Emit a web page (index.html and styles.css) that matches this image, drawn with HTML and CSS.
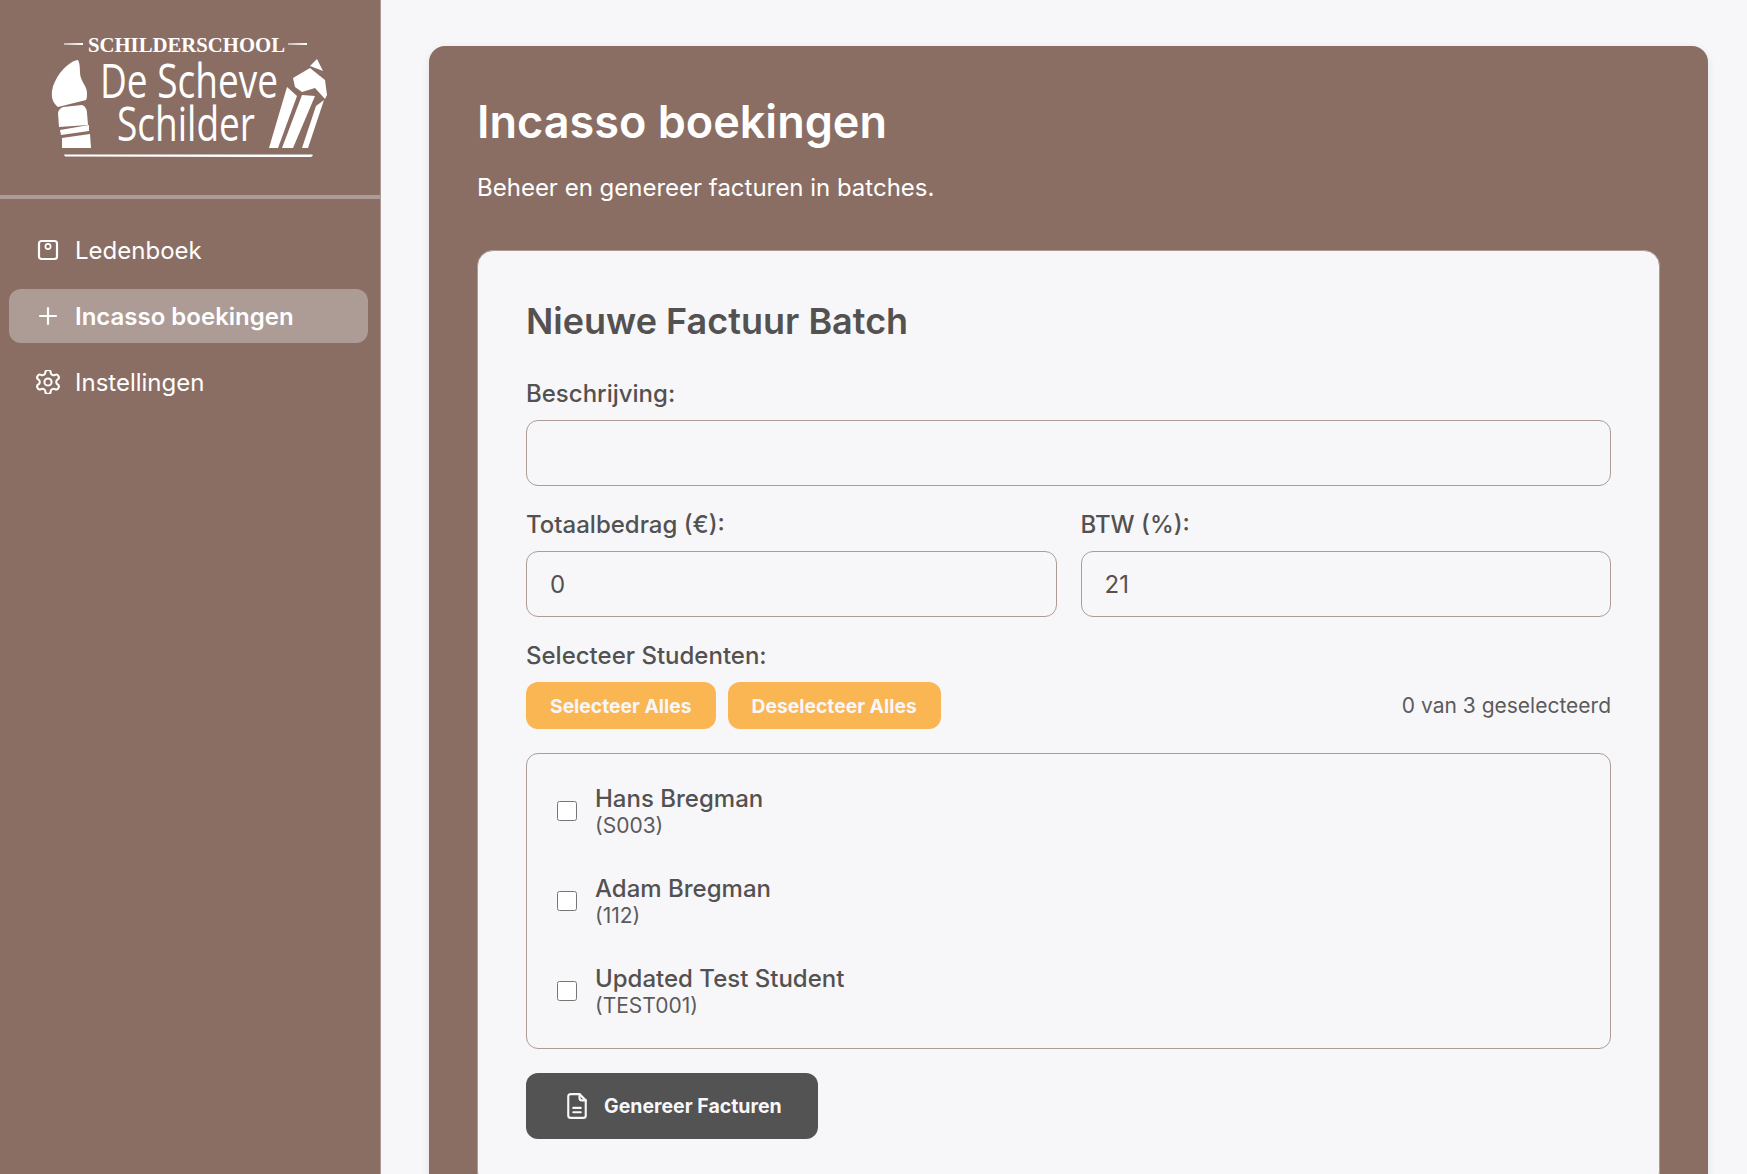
FILE: index.html
```html
<!DOCTYPE html>
<html lang="nl">
<head>
  <meta charset="UTF-8">
  <meta name="viewport" content="width=device-width, initial-scale=1.0">
  <title>Incasso boekingen</title>
  <link rel="stylesheet" href="styles.css">
</head>
<body>
  <div class="app">
    <aside class="sidebar">
      <div class="logo">
        <svg class="logo-img" viewBox="0 0 380 195" width="380" height="195" fill="#fff">
          <path d="M64 43.500l19-.5v2l-19-.5z"/>
          <path d="M288 43.500l19-.5v2l-19-.5z"/>
          <text class="logo-top" x="88" y="52" textLength="197" lengthAdjust="spacingAndGlyphs">SCHILDERSCHOOL</text>
          <text class="logo-hand" x="100" y="98" textLength="178" lengthAdjust="spacingAndGlyphs">De Scheve</text>
          <text class="logo-hand" x="117" y="141" textLength="138" lengthAdjust="spacingAndGlyphs">Schilder</text>
          <!-- brush -->
          <path d="M78 60c3 6 1 12 3 18 2 6 6 9 6 15 0 3 0 5-1 7l-28 7c-4-3-7-8-6-16 1-7 4-12 8-18 5-6 11-12 18-13z"/>
          <path d="M58 113c1-4 3-5 5-6l19-2c3 1 5 4 5 8l1 12-29 2z"/>
          <path d="M60 130l29-5v6l-28 4z"/>
          <path d="M62 138l28-4 1 14H62z"/>
          <!-- pencil -->
          <path d="M317 59l6 12-13-5z"/>
          <path d="M293 78l17-10 15 12 2 15-2 4-10-11-13 4-7-5z"/>
          <path d="M287 87l10 9-19 52h-9z"/>
          <path d="M302 95l13 1-22 52h-11z"/>
          <path d="M324 100l-16 48h-6l14-42z"/>
          <path d="M64 154.500h248l1 1-2 1.500-246-.5z"/>
        </svg>
      </div>
      <nav class="nav">
        <a class="nav-item">
          <svg class="nav-icon" viewBox="0 0 24 24"><rect x="3" y="3" width="18" height="18" rx="2.5"/><circle class="thin" cx="12" cy="8.500" r="2.600"/></svg>
          <span>Ledenboek</span>
        </a>
        <a class="nav-item active">
          <svg class="nav-icon" viewBox="0 0 24 24"><path d="M12 4v16M4 12h16"/></svg>
          <span>Incasso boekingen</span>
        </a>
        <a class="nav-item">
          <svg class="nav-icon gear" viewBox="2 2 20 20"><path d="M12.22 2h-.44a2 2 0 0 0-2 2v.18a2 2 0 0 1-1 1.73l-.43.25a2 2 0 0 1-2 0l-.15-.08a2 2 0 0 0-2.73.73l-.22.38a2 2 0 0 0 .73 2.73l.15.1a2 2 0 0 1 1 1.72v.51a2 2 0 0 1-1 1.74l-.15.09a2 2 0 0 0-.73 2.73l.22.38a2 2 0 0 0 2.73.73l.15-.08a2 2 0 0 1 2 0l.43.25a2 2 0 0 1 1 1.73V20a2 2 0 0 0 2 2h.44a2 2 0 0 0 2-2v-.18a2 2 0 0 1 1-1.73l.43-.25a2 2 0 0 1 2 0l.15.08a2 2 0 0 0 2.73-.73l.22-.39a2 2 0 0 0-.73-2.73l-.15-.08a2 2 0 0 1-1-1.74v-.5a2 2 0 0 1 1-1.74l.15-.09a2 2 0 0 0 .73-2.73l-.22-.38a2 2 0 0 0-2.73-.73l-.15.08a2 2 0 0 1-2 0l-.43-.25a2 2 0 0 1-1-1.73V4a2 2 0 0 0-2-2z"/><circle cx="12" cy="12" r="3"/></svg>
          <span>Instellingen</span>
        </a>
      </nav>
    </aside>

    <main class="main">
      <section class="panel">
        <h1 class="title">Incasso boekingen</h1>
        <p class="subtitle">Beheer en genereer facturen in batches.</p>

        <div class="card">
          <h2 class="card-title">Nieuwe Factuur Batch</h2>

          <div class="field">
            <label class="label">Beschrijving:</label>
            <input class="input" type="text">
          </div>

          <div class="field-row">
            <div class="field">
              <label class="label">Totaalbedrag (€):</label>
              <input class="input" type="text" value="0">
            </div>
            <div class="field">
              <label class="label">BTW (%):</label>
              <input class="input" type="text" value="21">
            </div>
          </div>

          <label class="label">Selecteer Studenten:</label>
          <div class="select-bar">
            <button class="btn-orange">Selecteer Alles</button>
            <button class="btn-orange">Deselecteer Alles</button>
            <span class="count">0 van 3 geselecteerd</span>
          </div>

          <div class="students">
            <label class="student">
              <input class="check" type="checkbox">
              <span class="student-info"><span class="student-name">Hans Bregman</span><span class="student-code">(S003)</span></span>
            </label>
            <label class="student">
              <input class="check" type="checkbox">
              <span class="student-info"><span class="student-name">Adam Bregman</span><span class="student-code">(112)</span></span>
            </label>
            <label class="student">
              <input class="check" type="checkbox">
              <span class="student-info"><span class="student-name">Updated Test Student</span><span class="student-code">(TEST001)</span></span>
            </label>
          </div>

          <button class="btn-dark">
            <svg class="btn-icon" viewBox="0 0 24 24"><path d="M14 2.500H7a2 2 0 0 0-2 2v15a2 2 0 0 0 2 2h10a2 2 0 0 0 2-2V7.500z"/><path d="M14 2.500v3a2 2 0 0 0 2 2h3"/><path d="M9 13.500h6M9 17h6"/></svg>
            Genereer Facturen
          </button>
        </div>
      </section>
    </main>
  </div>
</body>
</html>
```

FILE: styles.css
```css
* {
  box-sizing: border-box;
}
body {
  margin: 0;
  height: 100vh;
  overflow: hidden;
  background-color: #f7f7fa;
  font-family: Inter, "Noto Sans", sans-serif;
  color: #545151;
}
.app {
  display: flex;
  height: 100vh;
}
.sidebar {
  width: 381px;
  flex-shrink: 0;
  background-color: #8b6e63;
  border-right: 1px solid #ad9b96;
}
.logo {
  height: 199px;
  border-bottom: 4px solid #ad9b96;
}
.logo-img {
  display: block;
}
.logo-top {
  font-family: "Liberation Serif", serif;
  font-size: 21px;
  font-weight: bold;
}
.logo-hand {
  font-family: "Open Sans", sans-serif;
  font-size: 47px;
  font-weight: 500;
}
.nav {
  display: flex;
  flex-direction: column;
  gap: 12px;
  padding: 24px 12px 24px 9px;
}
.nav-item {
  display: flex;
  align-items: center;
  gap: 15px;
  height: 54px;
  padding-left: 27px;
  border-radius: 12px;
  font-size: 24px;
  color: #fff;
}
.nav-item.active {
  background-color: #ad9b96;
  font-weight: 600;
}
.nav-icon {
  width: 24px;
  height: 24px;
  fill: none;
  stroke: #fff;
  stroke-width: 2.2;
  stroke-linecap: round;
  stroke-linejoin: round;
}
.nav-icon .thin {
  stroke-width: 1.7;
}
.nav-icon.gear {
  stroke-width: 1.7;
}
.main {
  flex: 1;
  min-width: 0;
  padding: 46px 39px 48px 48px;
}
.panel {
  padding: 48px;
  border-radius: 16px;
  background-color: #8b6e63;
  box-shadow: 0 2px 8px rgba(0, 0, 0, 0.08);
  color: #fff;
}
.title {
  margin: 0;
  font-size: 45px;
  line-height: 56px;
  font-weight: 600;
}
.subtitle {
  margin: 23px 0 47px;
  font-size: 24px;
  line-height: 30px;
}
.card {
  padding: 48px;
  border: 1px solid #ad9b96;
  border-radius: 16px;
  background-color: #f7f7fa;
  color: #545151;
}
.card-title {
  margin: 0 0 36px;
  font-size: 36px;
  line-height: 44px;
  font-weight: 600;
}
.field {
  flex: 1;
  margin-bottom: 24px;
}
.field-row {
  display: flex;
  gap: 24px;
}
.label {
  display: block;
  margin-bottom: 11px;
  font-size: 24px;
  line-height: 30px;
  font-weight: 500;
}
.input {
  display: block;
  width: 100%;
  height: 66px;
  padding: 0 23px;
  border: 1px solid #ad9b96;
  border-radius: 12px;
  background-color: #f7f7fa;
  font-family: inherit;
  font-size: 24px;
  color: #545151;
}
.select-bar {
  display: flex;
  align-items: center;
  gap: 12px;
  margin-bottom: 24px;
}
.btn-orange {
  height: 47px;
  padding: 0 24px;
  border: none;
  border-radius: 12px;
  background-color: #fbb654;
  font-family: inherit;
  font-size: 19.3px;
  font-weight: 700;
  color: #f7f7fa;
}
.count {
  margin-left: auto;
  font-size: 21px;
  color: #5c5a5a;
}
.students {
  display: flex;
  flex-direction: column;
  gap: 36px;
  padding: 30px;
  margin-bottom: 24px;
  border: 1px solid #ad9b96;
  border-radius: 12px;
}
.student {
  display: flex;
  align-items: center;
  gap: 18px;
}
.check {
  width: 20px;
  height: 20px;
  margin: 0;
}
.student-info {
  display: flex;
  flex-direction: column;
}
.student-name {
  font-size: 24px;
  line-height: 30px;
  font-weight: 500;
}
.student-code {
  font-size: 21px;
  line-height: 24px;
  color: #5c5a5a;
}
.btn-dark {
  display: flex;
  align-items: center;
  gap: 12px;
  height: 66px;
  padding: 0 36px;
  border: none;
  border-radius: 12px;
  background-color: #535353;
  font-family: inherit;
  font-size: 19.5px;
  font-weight: 700;
  color: #f7f7fa;
}
.btn-icon {
  width: 30px;
  height: 30px;
  fill: none;
  stroke: #f7f7fa;
  stroke-width: 1.7;
  stroke-linecap: round;
  stroke-linejoin: round;
}
```
